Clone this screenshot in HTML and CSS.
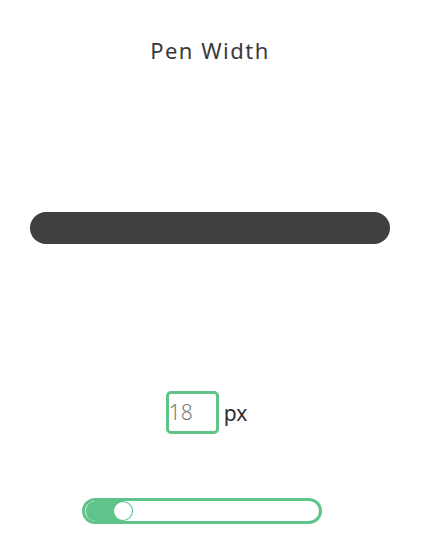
FILE: index.html
```html
<!DOCTYPE html>
<html lang="en">

<head>
    <meta charset="utf-8">
    <meta name="viewport" content="width=device-width, initial-scale=1.0">
    <title>Pen Width</title>

    <link rel="stylesheet" href="styles.css">

</head>

<body>

    <main class="panel">
        <h1 class="titel">Pen Width</h1>

        <section class="preview">
            <div class="streg"></div>
        </section>

        <div class="vaerdi">
            <input class="tal" type="text" value="18">
            <span class="enhed">px</span>
        </div>

        <div class="slider">
            <div class="fyld">
                <span class="knap"></span>
            </div>
        </div>
    </main>

</body>

</html>
```

FILE: styles.css
```css
body {
    margin: 0;
    background-color: #fff;
    font-family: "Noto Sans", "DejaVu Sans", sans-serif;
}

.panel {
    width: 420px;
    height: 536px;
    display: flex;
    flex-direction: column;
    align-items: center;
}

.titel {
    margin: 36px 0 0;
    font-size: 22px;
    font-weight: 400;
    letter-spacing: 1.5px;
    color: #3a3a3a;
    line-height: 28px;
}

.preview {
    box-sizing: border-box;
    width: 100%;
    height: 300px;
    padding-top: 148px;
    display: flex;
    justify-content: center;
}

.streg {
    width: 360px;
    height: 32px;
    border-radius: 16px;
    background-color: #404040;
}

.vaerdi {
    margin-top: 27px;
    margin-right: 7px;
    display: flex;
    align-items: center;
    gap: 5px;
}

.tal {
    box-sizing: border-box;
    width: 53px;
    height: 43px;
    border: 3px solid #5ec48a;
    border-radius: 5px;
    padding: 0 0 2px 0;
    font-family: inherit;
    font-size: 21px;
    font-weight: 300;
    color: #7a7a7a;
    outline: none;
}

.enhed {
    font-size: 21px;
    color: #2e2e2e;
}

.slider {
    box-sizing: border-box;
    margin-top: 64px;
    margin-right: 17px;
    width: 240px;
    height: 26px;
    border: 3px solid #5ec48a;
    border-radius: 13px;
    background-color: #fff;
    overflow: hidden;
}

.fyld {
    width: 48px;
    height: 100%;
    background-color: #5ec48a;
    border-radius: 10px;
    display: flex;
    align-items: center;
    justify-content: flex-end;
    box-shadow: inset 2px 0 0 -1px rgba(255, 255, 255, 0.6);
}

.knap {
    width: 18px;
    height: 18px;
    margin-right: 1px;
    border-radius: 50%;
    background-color: #fff;
}
```
